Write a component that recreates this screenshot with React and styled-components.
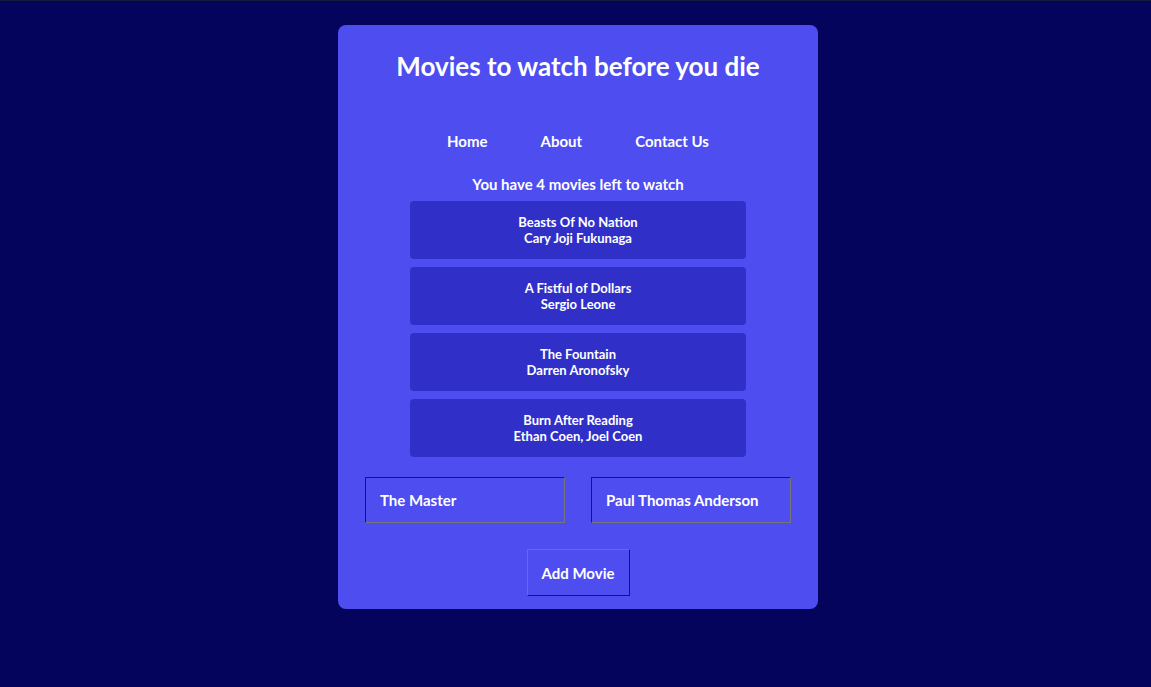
import React, { useState } from "react";
import styled, { createGlobalStyle } from "styled-components";

const GlobalStyle = createGlobalStyle`
  * { box-sizing: border-box; }
  body {
    margin: 0;
    background: #04045c;
    color: #fff;
    font-family: Lato, "Open Sans", sans-serif;
    font-weight: 700;
  }
`;

const Page = styled.div`
  min-height: 100vh;
  border-top: 1px solid #15193a;
  padding: 24px 16px 24px 21px;
`;

const Card = styled.main`
  max-width: 480px;
  margin: 0 auto;
  padding: 24px 24px 13px;
  border-radius: 8px;
  background: #4d4df0;
  text-align: center;
`;

const Title = styled.h1`
  margin: 0;
  font-size: 26px;
  line-height: 34px;
`;

const Nav = styled.nav`
  display: flex;
  justify-content: center;
  gap: 53px;
  margin-top: 48px;
`;

const NavLink = styled.a`
  color: inherit;
  text-decoration: none;
  font-size: 15px;
  line-height: 20px;
`;

const Summary = styled.h2`
  margin: 23px 0 7px;
  font-size: 15px;
  line-height: 20px;
`;

const MovieList = styled.ul`
  display: grid;
  gap: 8px;
  margin: 0 48px;
  padding: 0;
  list-style: none;
`;

const Movie = styled.li`
  padding: 13px;
  border-radius: 4px;
  background: #3030c9;
  font-size: 13px;
  line-height: 16px;
`;

const MovieLine = styled.div``;

const Form = styled.form`
  margin-top: 20px;
`;

const Fields = styled.div`
  display: flex;
  justify-content: center;
  gap: 26px;
`;

const Field = styled.input`
  flex: 0 1 200px;
  min-width: 0;
  height: 46px;
  padding: 0 14px;
  border: 1px inset #767676;
  background: transparent;
  color: inherit;
  font: inherit;
  font-size: 15px;
`;

const AddButton = styled.button`
  height: 47px;
  margin-top: 26px;
  padding: 0 14px;
  border: 1px outset #767676;
  background: transparent;
  color: inherit;
  font: inherit;
  font-size: 15px;
`;

const initialMovies = [
  { name: "Beasts Of No Nation", director: "Cary Joji Fukunaga" },
  { name: "A Fistful of Dollars", director: "Sergio Leone" },
  { name: "The Fountain", director: "Darren Aronofsky" },
  { name: "Burn After Reading", director: "Ethan Coen, Joel Coen" },
];

export default function App() {
  const [movies, setMovies] = useState(initialMovies);
  const [name, setName] = useState("The Master");
  const [director, setDirector] = useState("Paul Thomas Anderson");

  const addMovie = (event) => {
    event.preventDefault();
    setMovies([...movies, { name, director }]);
  };

  return (
    <>
      <GlobalStyle />
      <Page>
        <Card>
          <Title>Movies to watch before you die</Title>
          <Nav>
            <NavLink href="#home">Home</NavLink>
            <NavLink href="#about">About</NavLink>
            <NavLink href="#contact">Contact Us</NavLink>
          </Nav>
          <Summary>You have {movies.length} movies left to watch</Summary>
          <MovieList>
            {movies.map((movie, index) => (
              <Movie key={index}>
                <MovieLine>{movie.name}</MovieLine>
                <MovieLine>{movie.director}</MovieLine>
              </Movie>
            ))}
          </MovieList>
          <Form onSubmit={addMovie}>
            <Fields>
              <Field aria-label="Movie" value={name} onChange={(e) => setName(e.target.value)} />
              <Field aria-label="Director" value={director} onChange={(e) => setDirector(e.target.value)} />
            </Fields>
            <AddButton type="submit">Add Movie</AddButton>
          </Form>
        </Card>
      </Page>
    </>
  );
}
